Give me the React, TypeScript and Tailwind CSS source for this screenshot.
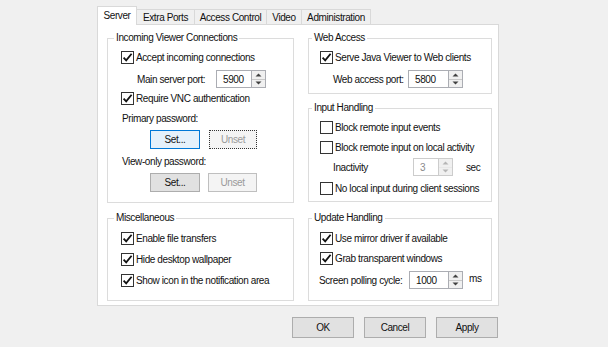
import React from "react";

const font = "font-['Liberation_Sans',Arial,sans-serif] text-[10px] tracking-[-0.4px] text-[#111]";

function CheckBox({ checked, label, className = "" }: { checked?: boolean; label: string; className?: string }) {
  return (
    <div className={`flex items-center h-[20px] ${className}`}>
      <span className="w-[13px] h-[13px] border border-[#333] bg-white flex items-center justify-center shrink-0">
        {checked && (
          <svg width="11" height="11" viewBox="0 0 11 11">
            <path d="M1.6 5.6 L4.2 8.4 L9.6 1.8" stroke="#111" strokeWidth="1.8" fill="none" />
          </svg>
        )}
      </span>
      <span className="ml-[2px] whitespace-nowrap">{label}</span>
    </div>
  );
}

function Arrow({ up, disabled }: { up?: boolean; disabled?: boolean }) {
  const c = disabled ? "#b5b5b5" : "#404040";
  return (
    <div className="flex-1 flex items-center justify-center bg-[#f0f0f0]">
      <svg width="7" height="4" viewBox="0 0 7 4">
        <path d={up ? "M0.5 3.5 L3.5 0.5 L6.5 3.5 Z" : "M0.5 0.5 L3.5 3.5 L6.5 0.5 Z"} fill={c} />
      </svg>
    </div>
  );
}

function SpinBox({ value, inputW, disabled }: { value: string; inputW: string; disabled?: boolean }) {
  return (
    <div className="flex h-[18px]">
      <div className={`${inputW} border border-r-0 flex items-center pl-[6px] ${disabled ? "border-[#cccccc] text-[#8a8a8a] bg-white" : "border-[#abadb3] bg-white"}`}>
        {value}
      </div>
      <div className={`w-[15px] border flex flex-col gap-px ${disabled ? "border-[#cccccc] bg-[#e8e8e8]" : "border-[#abadb3] bg-[#c8c8c8]"}`}>
        <Arrow up disabled={disabled} />
        <Arrow disabled={disabled} />
      </div>
    </div>
  );
}

function Group({ title, legendMl, className, children }: { title: string; legendMl: string; className: string; children: React.ReactNode }) {
  return (
    <fieldset className={`border border-[#dcdcdc] min-w-0 ${className}`}>
      <legend className={`${legendMl} px-[2px] leading-[12px]`}>{title}</legend>
      {children}
    </fieldset>
  );
}

function Btn({ label, className = "" }: { label: string; className?: string }) {
  return (
    <div className={`flex items-center justify-center h-[19px] border ${className}`}>{label}</div>
  );
}

const tabs = [
  { label: "Extra Ports", w: "w-[58px]" },
  { label: "Access Control", w: "w-[72px]" },
  { label: "Video", w: "w-[35px]" },
  { label: "Administration", w: "w-[69px]" },
];

export default function App() {
  return (
    <div className={`w-[608px] h-[347px] bg-[#f0f0f0] pl-[97px] pt-[6px] ${font}`}>
      <div className="w-[402px]">
        <div className="flex items-end h-[18px]">
          <div className="relative z-10 -mb-px h-[19px] w-[40px] bg-white border border-b-0 border-[#d9d9d9] flex items-center justify-center pb-[1px]">
            Server
          </div>
          {tabs.map((t) => (
            <div key={t.label} className={`${t.w} h-[15px] bg-[#f0f0f0] border border-b-0 border-l-0 border-[#d9d9d9] flex items-center justify-center`}>
              {t.label}
            </div>
          ))}
        </div>

        <div className="h-[282px] bg-white border border-[#d9d9d9] pl-[9px] pt-[7px] flex gap-[14px]">
          <div className="w-[187px] flex flex-col">
            <Group title="Incoming Viewer Connections" legendMl="ml-[6px]" className="h-[171px]">
              <CheckBox checked label="Accept incoming connections" className="ml-[13px] mt-[3px]" />
              <div className="flex items-center mt-[3px]">
                <span className="ml-[29px] w-[79px] whitespace-nowrap">Main server port:</span>
                <SpinBox value="5900" inputW="w-[35px]" />
              </div>
              <CheckBox checked label="Require VNC authentication" className="ml-[13px]" />
              <div className="ml-[14px] mt-[4px] h-[14px] leading-[14px]">Primary password:</div>
              <div className="flex ml-[42px] mt-[4px] gap-[9px]">
                <Btn label="Set..." className="w-[50px] bg-[#e5f1fb] border-[#0078d7]" />
                <Btn label="Unset" className="w-[48px] bg-[#f4f4f4] border-dotted border-[#333] text-[#9a9a9a]" />
              </div>
              <div className="ml-[14px] mt-[6px] h-[14px] leading-[14px]">View-only password:</div>
              <div className="flex ml-[42px] mt-[4px] gap-[8px]">
                <Btn label="Set..." className="w-[50px] bg-[#e1e1e1] border-[#adadad]" />
                <Btn label="Unset" className="w-[49px] bg-[#f4f4f4] border-[#bfbfbf] text-[#9a9a9a]" />
              </div>
            </Group>
            <Group title="Miscellaneous" legendMl="ml-[6px]" className="h-[89px] mt-[9px]">
              <CheckBox checked label="Enable file transfers" className="ml-[13px] mt-[4px]" />
              <CheckBox checked label="Hide desktop wallpaper" className="ml-[13px] mt-[1px]" />
              <CheckBox checked label="Show icon in the notification area" className="ml-[13px] mt-[1px]" />
            </Group>
          </div>

          <div className="w-[184px] flex flex-col">
            <Group title="Web Access" legendMl="ml-[3px]" className="h-[62px]">
              <CheckBox checked label="Serve Java Viewer to Web clients" className="ml-[11px] mt-[3px]" />
              <div className="flex items-center mt-[3px]">
                <span className="ml-[24px] w-[75px] whitespace-nowrap">Web access port:</span>
                <SpinBox value="5800" inputW="w-[40px]" />
              </div>
            </Group>
            <Group title="Input Handling" legendMl="ml-[3px]" className="h-[100px] mt-[8px]">
              <CheckBox label="Block remote input events" className="ml-[11px] mt-[3px]" />
              <CheckBox label="Block remote input on local activity" className="ml-[11px]" />
              <div className="flex items-center mt-[1px]">
                <span className="ml-[24px] w-[80px]">Inactivity</span>
                <SpinBox value="3" inputW="w-[25px]" disabled />
                <span className="ml-[13px]">sec</span>
              </div>
              <CheckBox label="No local input during client sessions" className="ml-[11px] mt-[2px]" />
            </Group>
            <Group title="Update Handling" legendMl="ml-[3px]" className="h-[89px] mt-[10px]">
              <CheckBox checked label="Use mirror driver if available" className="ml-[11px] mt-[4px]" />
              <CheckBox checked label="Grab transparent windows" className="ml-[11px]" />
              <div className="flex items-center mt-[3px]">
                <span className="ml-[10px] w-[90px] whitespace-nowrap">Screen polling cycle:</span>
                <SpinBox value="1000" inputW="w-[39px]" />
                <span className="ml-[6px] -mt-[4px]">ms</span>
              </div>
            </Group>
          </div>
        </div>

        <div className="flex justify-end gap-[10px] mt-[11px] pr-px">
          <Btn label="OK" className="w-[62px] h-[21px] bg-[#e1e1e1] border-[#adadad]" />
          <Btn label="Cancel" className="w-[62px] h-[21px] bg-[#e1e1e1] border-[#adadad]" />
          <Btn label="Apply" className="w-[62px] h-[21px] bg-[#e1e1e1] border-[#adadad]" />
        </div>
      </div>
    </div>
  );
}
